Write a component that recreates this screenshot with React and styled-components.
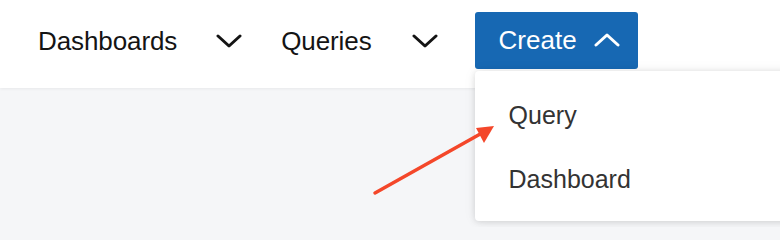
import React from "react";
import styled, { createGlobalStyle } from "styled-components";

const Global = createGlobalStyle`
  html, body { margin: 0; padding: 0; }
  body {
    background: #f5f6f8;
    font-family: "Liberation Sans", Arial, sans-serif;
    overflow: hidden;
  }
`;

const Page = styled.div`
  position: relative;
  width: 780px;
  height: 227px;
  background: #f5f6f8;
  overflow: hidden;
`;

const Header = styled.header`
  height: 88px;
  background: #ffffff;
  box-shadow: 0 1px 3px rgba(0, 0, 0, 0.06);
  display: flex;
  align-items: center;
  padding: 0 0 6px 38px;
  box-sizing: border-box;
`;

const NavItem = styled.div`
  display: flex;
  align-items: center;
  gap: ${(p) => p.$gap}px;
  margin-right: ${(p) => p.$after}px;
  font-size: 26px;
  color: #141414;
  letter-spacing: -0.1px;
`;

const CreateWrap = styled.div`
  position: relative;
  margin-top: -2px;
`;

const CreateButton = styled.button`
  display: flex;
  align-items: center;
  gap: 17px;
  height: 57px;
  width: 163px;
  box-sizing: border-box;
  padding: 0 0 0 24px;
  border: none;
  border-radius: 3px;
  background: #1768b3;
  color: #ffffff;
  font-family: "Liberation Sans", Arial, sans-serif;
  font-size: 26px;
  cursor: pointer;
`;

const Menu = styled.div`
  position: absolute;
  left: 0;
  top: 59px;
  width: 330px;
  box-sizing: border-box;
  padding: 13px 0 9px;
  background: #ffffff;
  border-radius: 4px;
  box-shadow: 0 1px 6px rgba(0, 0, 0, 0.12), 0 0 14px rgba(0, 0, 0, 0.06);
`;

const MenuItem = styled.div`
  height: 64px;
  display: flex;
  align-items: center;
  padding-left: 34px;
  font-size: 25px;
  color: #333333;
`;

const Annotation = styled.svg`
  position: absolute;
  left: 0;
  top: 0;
  pointer-events: none;
`;

const Chevron = ({ up, color = "#141414" }) => (
  <svg width="26" height="14" viewBox="0 0 26 14" fill="none">
    <polyline
      points={up ? "2,12 13,2 24,12" : "2,2 13,12 24,2"}
      stroke={color}
      strokeWidth="3"
      strokeLinecap="round"
      strokeLinejoin="round"
    />
  </svg>
);

export default function App() {
  return (
    <>
      <Global />
      <Page>
        <Header>
          <NavItem $gap={39} $after={39}>
            Dashboards
            <Chevron />
          </NavItem>
          <NavItem $gap={40} $after={37}>
            Queries
            <Chevron />
          </NavItem>
          <CreateWrap>
            <CreateButton>
              Create
              <Chevron up color="#ffffff" />
            </CreateButton>
            <Menu>
              <MenuItem>Query</MenuItem>
              <MenuItem>Dashboard</MenuItem>
            </Menu>
          </CreateWrap>
        </Header>
        <Annotation width="780" height="227" viewBox="0 0 780 227">
          <line x1="375" y1="193" x2="482" y2="133" stroke="#f4472a" strokeWidth="3.5" strokeLinecap="round" />
          <polygon points="494,126 476,128 484,143" fill="#f4472a" />
        </Annotation>
      </Page>
    </>
  );
}
